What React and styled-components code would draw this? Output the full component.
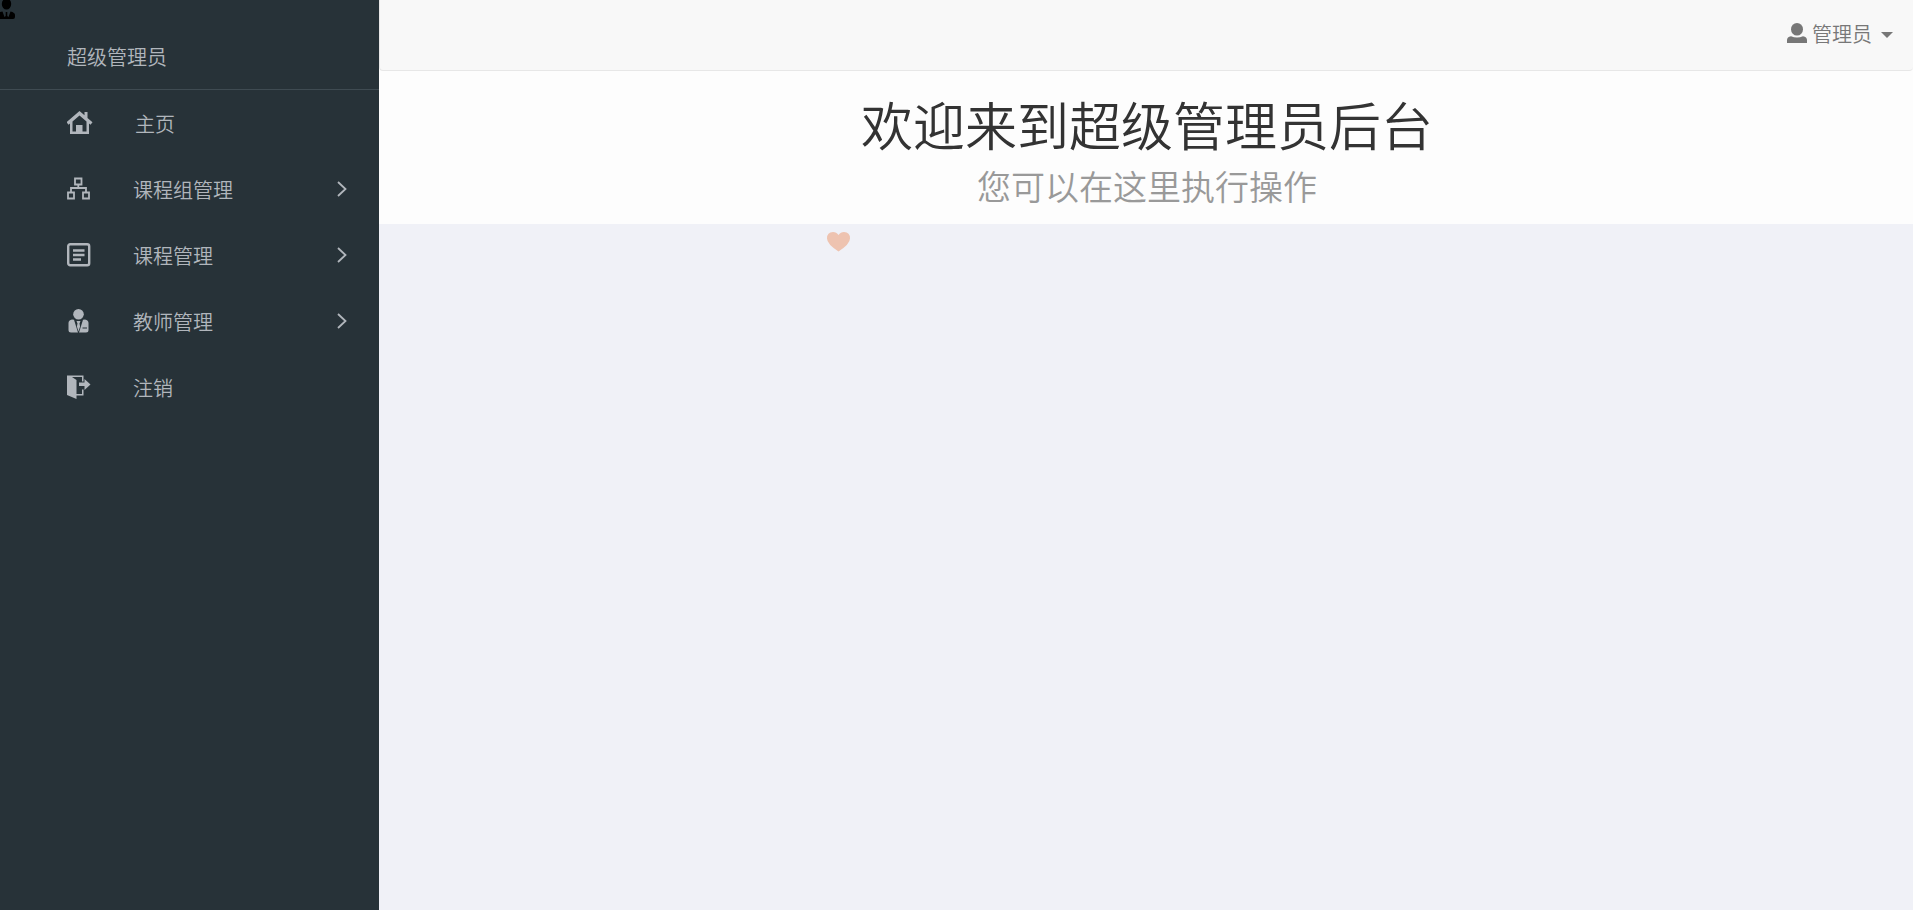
import React from "react";
import styled, { createGlobalStyle } from "styled-components";

const GlobalStyle = createGlobalStyle`
  * {
    box-sizing: border-box;
  }

  body {
    margin: 0;
    background: #f0f1f7;
    color: #333;
    font-family: "Noto Sans CJK SC", sans-serif;
    font-size: 20px;
    font-weight: 350;
  }
`;

const Layout = styled.div`
  display: flex;
  min-height: 100vh;
`;

const Sidebar = styled.aside`
  position: relative;
  flex: 0 0 379px;
  background: #273238;
  color: #b1b6bc;
`;

const Avatar = styled.span`
  position: absolute;
  top: 0;
  left: 0;
  display: flex;
  color: #000;
`;

const SidebarTitle = styled.div`
  height: 90px;
  padding: 24px 67px 0;
  border-bottom: 1px solid #3f4b52;
  line-height: 66px;
`;

const Menu = styled.ul`
  margin: 0;
  padding: 0;
  list-style: none;
`;

const MenuLink = styled.a`
  display: flex;
  align-items: center;
  height: 66px;
  padding: 0 32px 0 67px;
  color: inherit;
  text-decoration: none;

  svg {
    flex: none;
  }
`;

const MenuLabel = styled.span`
  flex: 1;
  margin-left: 42px;
`;

const Content = styled.div`
  flex: 1;
  min-width: 0;
`;

const Panel = styled.div`
  background: #fdfdfd;
`;

const Navbar = styled.header`
  display: flex;
  justify-content: flex-end;
  height: 71px;
  padding: 0 20px;
  background: #f8f8f8;
  border: 1px solid #e7e7e7;
  border-width: 0 0 1px 1px;
  border-radius: 0 0 4px 4px;
`;

const UserButton = styled.button`
  display: flex;
  align-items: center;
  gap: 5px;
  padding: 0 0 4px;
  border: 0;
  background: none;
  color: #777;
  font: inherit;
  cursor: pointer;
`;

const Caret = styled.span`
  margin: 4px 0 0 4px;
  border-top: 6px solid;
  border-right: 6px solid transparent;
  border-left: 6px solid transparent;
`;

const Welcome = styled.main`
  padding: 18px 0 12px 2px;
  text-align: center;
`;

const Title = styled.h1`
  margin: 0;
  font-size: 52px;
  font-weight: 350;
  line-height: 70px;
`;

const Subtitle = styled.p`
  margin: 0;
  color: #999;
  font-size: 34px;
  line-height: 53px;
`;

const Heart = styled.svg`
  position: absolute;
  top: 232px;
  left: 827px;
  fill: #eec3b0;
`;

function HomeIcon() {
  return (
    <svg width="26" height="24" viewBox="0 0 26 24" fill="currentColor">
      <path d="M12.5 0 17.5 4.3V1h3v5.9l5 4.3-2 2.6L22 12.6V23H3V12.6l-1.5 1.2L-.5 11.2ZM12.5 4.5 5.5 10.4V20.5H9V14h6.5v6.5h4V10.4Z" />
    </svg>
  );
}

function GroupIcon() {
  return (
    <svg
      width="24"
      height="24"
      viewBox="0 0 24 24"
      fill="none"
      stroke="currentColor"
      strokeWidth="1.8"
    >
      <path d="M8 1.5h6.5v6H8zM1 15.5h6v6H1zM16 15.5h6v6h-6zM11.3 7.5V11M4 15.5V11h15v4.5" />
    </svg>
  );
}

function CourseIcon() {
  return (
    <svg
      width="24"
      height="24"
      viewBox="0 0 24 24"
      fill="none"
      stroke="currentColor"
      strokeWidth="2.4"
    >
      <rect x="1.2" y="1.2" width="21" height="21" rx="2" />
      <path d="M6 7.5h11.5M6 12h11.5M6 16.5h8" />
    </svg>
  );
}

function TeacherIcon() {
  return (
    <svg width="24" height="24" viewBox="0 0 24 24" fill="currentColor">
      <circle cx="11.5" cy="5.3" r="5.3" />
      <path d="M5 10.5 7 10.8 11 23.5H4Q1.5 23.5 1.5 21v-7q0-3 3.5-3.5ZM9.5 12h4l-1 2.5.6 3-1.600 5-1.600-5 .6-3ZM16 10.8l2-.3q3.5.5 3.5 3.5v7q0 2.5-2.5 2.5h-7ZM15.5 18.5v1H20v-1Z" />
    </svg>
  );
}

function LogoutIcon() {
  return (
    <svg width="24" height="24" viewBox="0 0 24 24" fill="currentColor">
      <path d="M0 .5h16.5v6H15V2H5l4.5 3v14H15v-4.5h1.5v6h-7V24L0 20ZM12 7.5h5.5V4L23.5 9.5 17.5 15v-4H12Z" />
    </svg>
  );
}

function ChevronIcon() {
  return (
    <svg
      width="10"
      height="16"
      viewBox="0 0 10 16"
      fill="none"
      stroke="currentColor"
      strokeWidth="1.8"
    >
      <path d="m1 1 7.5 7L1 15" />
    </svg>
  );
}

function PersonIcon() {
  return (
    <svg width="20" height="20" viewBox="0 0 20 20" fill="currentColor">
      <ellipse cx="10" cy="6.3" rx="6" ry="6.3" />
      <path d="M0 20v-3q0-3 4-3.8 6 2.8 12 0 4 .8 4 3.8v3Z" />
    </svg>
  );
}

function AvatarIcon() {
  return (
    <svg width="15" height="19" viewBox="0 0 15 19" fill="currentColor">
      <ellipse cx="6.5" cy="4" rx="4.7" ry="5.5" />
      <path d="M0 12 2.5 11.5 4.5 17 5.7 16V12H7.3v4L8.5 17 10.5 11.5Q15 12.5 15 15v2q0 2-2 2H0Z" />
    </svg>
  );
}

const items = [
  { label: "主页", icon: HomeIcon },
  { label: "课程组管理", icon: GroupIcon, hasChildren: true },
  { label: "课程管理", icon: CourseIcon, hasChildren: true },
  { label: "教师管理", icon: TeacherIcon, hasChildren: true },
  { label: "注销", icon: LogoutIcon },
];

function SideMenu() {
  return (
    <Menu>
      {items.map(({ label, icon: Icon, hasChildren }) => (
        <li key={label}>
          <MenuLink href="#">
            <Icon />
            <MenuLabel>{label}</MenuLabel>
            {hasChildren && <ChevronIcon />}
          </MenuLink>
        </li>
      ))}
    </Menu>
  );
}

function App() {
  return (
    <Layout>
      <GlobalStyle />
      <Sidebar>
        <Avatar>
          <AvatarIcon />
        </Avatar>
        <SidebarTitle>超级管理员</SidebarTitle>
        <SideMenu />
      </Sidebar>
      <Content>
        <Panel>
          <Navbar>
            <UserButton type="button">
              <PersonIcon />
              管理员
              <Caret />
            </UserButton>
          </Navbar>
          <Welcome>
            <Title>欢迎来到超级管理员后台</Title>
            <Subtitle>您可以在这里执行操作</Subtitle>
          </Welcome>
        </Panel>
      </Content>
      <Heart width="23" height="20" viewBox="0 0 23 20">
        <path d="M11.5 3Q9.5 0 6 0 0 0 0 6.5 0 12 11.5 19.5 23 12 23 6.5 23 0 17 0 13.5 0 11.5 3Z" />
      </Heart>
    </Layout>
  );
}

export default App;
